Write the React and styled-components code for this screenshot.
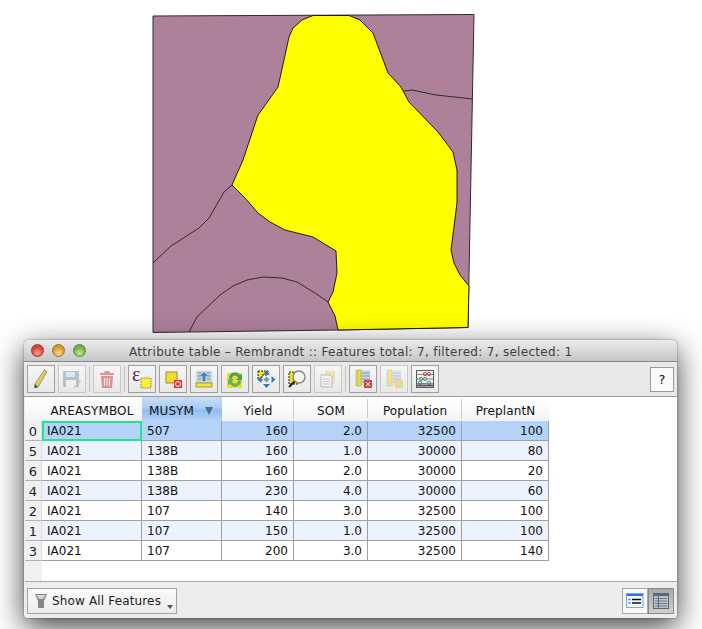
import React from 'react'
import styled, { createGlobalStyle } from 'styled-components'

const rows = [
  { id: 0, sym: '507', yieldVal: 160, som: '2.0', pop: 32500, plant: 100, selected: true },
  { id: 5, sym: '138B', yieldVal: 160, som: '1.0', pop: 30000, plant: 80, alt: true },
  { id: 6, sym: '138B', yieldVal: 160, som: '2.0', pop: 30000, plant: 20 },
  { id: 4, sym: '138B', yieldVal: 230, som: '4.0', pop: 30000, plant: 60, alt: true },
  { id: 2, sym: '107', yieldVal: 140, som: '3.0', pop: 32500, plant: 100 },
  { id: 1, sym: '107', yieldVal: 150, som: '1.0', pop: 32500, plant: 100, alt: true },
  { id: 3, sym: '107', yieldVal: 200, som: '3.0', pop: 32500, plant: 140 },
]

const COLUMNS = '17px 100px 80px 72px 74px 94px 87px'

const GlobalStyle = createGlobalStyle`
  html, body {
    margin: 0;
    padding: 0;
    background: #fff;
  }
  body {
    width: 702px;
    height: 629px;
    overflow: hidden;
    font-family: "DejaVu Sans", "Liberation Sans", sans-serif;
    font-size: 12px;
    color: #111;
  }
`

const MapCanvas = styled.svg`
  display: block;
  width: 702px;
  height: 340px;
`

const Window = styled.div`
  position: relative;
  width: 653px;
  height: 278px;
  margin-left: 24px;
  display: flex;
  flex-direction: column;
  border-radius: 5px 5px 3px 3px;
  background: #ededed;
  box-shadow: 0 9px 30px rgba(0, 0, 0, 0.75), 0 0 2px rgba(0, 0, 0, 0.5);
  overflow: hidden;
`

const TitleBar = styled.div`
  height: 22px;
  flex: none;
  display: flex;
  align-items: center;
  position: relative;
  padding-left: 7px;
  gap: 8px;
  background: linear-gradient(#ececec, #c6c6c6);
  border-bottom: 1px solid #868686;
  box-sizing: border-box;
`

const Light = styled.span`
  width: 13px;
  height: 13px;
  border-radius: 50%;
  border: 1px solid ${(p) => p.$edge};
  box-sizing: border-box;
  background: radial-gradient(circle at 50% 75%, ${(p) => p.$glow}, ${(p) => p.$color} 60%);
`

const Title = styled.div`
  flex: 1;
  margin-left: 35px;
  padding-top: 2px;
  text-align: left;
  color: #3d3d3d;
  font-size: 12px;
  letter-spacing: 0.3px;
  white-space: nowrap;
`

const Toolbar = styled.div`
  height: 35px;
  flex: none;
  display: flex;
  align-items: center;
  gap: 3px;
  padding: 0 3px 0 3px;
  background: #e9e9e9;
  border-bottom: 1px solid #9c9c9c;
  box-sizing: border-box;
`

const ToolButton = styled.button`
  width: 28px;
  height: 28px;
  padding: 0;
  margin: 0;
  display: flex;
  align-items: center;
  justify-content: center;
  background: linear-gradient(#f6f6f6, #e8e8e8);
  border: 1px solid ${(p) => (p.disabled ? '#c8c8c8' : '#a0a0a0')};
  svg {
    overflow: visible;
    opacity: ${(p) => (p.disabled ? 0.5 : 1)};
  }
`

const Divider = styled.span`
  width: 1px;
  height: 26px;
  background: #c4c4c4;
`

const HelpButton = styled.button`
  width: 24px;
  height: 25px;
  margin: 0 0 0 auto;
  padding: 0;
  font-family: inherit;
  font-size: 13px;
  color: #111;
  background: #fafafa;
  border: 1px solid #9a9a9a;
`

const TableArea = styled.div`
  flex: 1;
  background: #fff;
  border-bottom: 1px solid #ababab;
  display: flex;
  flex-direction: column;
  box-sizing: border-box;
  margin-left: 1px;
`

const Row = styled.div`
  display: grid;
  grid-template-columns: ${COLUMNS};
  width: 524px;
`

const HeaderRow = styled(Row)`
  height: 24px;
  grid-template-rows: 24px;
`

const HeaderCell = styled.div`
  display: flex;
  align-items: center;
  justify-content: ${(p) => (p.$active ? 'space-between' : 'center')};
  padding: ${(p) => (p.$active ? '3px 9px 0 7px' : '3px 0 0')};
  box-sizing: border-box;
  letter-spacing: 0.12px;
  background: ${(p) => (p.$active ? 'linear-gradient(#c9def6, #a9cdf3 45%, #8fbdf0 55%, #b4d3f5)' : 'linear-gradient(#fff, #f3f3f3)')};
  position: relative;
  &::after {
    content: '';
    position: absolute;
    right: 0;
    top: 2px;
    bottom: 3px;
    width: 1px;
    background: ${(p) => (p.$plain || p.$active ? 'transparent' : '#c9c9c9')};
  }
`

const SortArrow = styled.span`
  width: 0;
  height: 0;
  border-left: 4px solid transparent;
  border-right: 4px solid transparent;
  border-top: 8px solid #4f6a8c;
`

const DataRow = styled(Row)`
  height: 20px;
  grid-template-rows: 20px;
  background: ${(p) => (p.$selected ? '#b5d3f9' : p.$alt ? '#edf3fe' : '#fff')};
`

const RowHead = styled.div`
  background: #f0f0f0;
  border-bottom: 1px solid #b2b2b2;
  border-right: 1px solid #dcdcdc;
  box-sizing: border-box;
  text-align: center;
  line-height: 22px;
  font-size: 13px;
  color: #222;
`

const Cell = styled.div`
  box-sizing: border-box;
  border-right: 1px solid #a0a0a0;
  border-bottom: 1px solid #a0a0a0;
  padding: 0 ${(p) => (p.$num ? '5px' : '4px')} 0 ${(p) => (p.$num ? '0' : '5px')};
  text-align: ${(p) => (p.$num ? 'right' : 'left')};
  line-height: 20px;
  white-space: nowrap;
  overflow: hidden;
`

const FocusCell = styled(Cell)`
  border: 2px solid #1fe88c;
  padding-left: 3px;
  line-height: 17px;
`

const EmptyHead = styled.div`
  flex: 1;
  width: 17px;
  background: #f0f0f0;
`

const Footer = styled.div`
  height: 36px;
  flex: none;
  display: flex;
  align-items: flex-start;
  justify-content: space-between;
  padding: 6px 3px 0 3px;
  box-sizing: border-box;
`

const FilterButton = styled.button`
  width: 150px;
  height: 26px;
  display: flex;
  align-items: center;
  padding: 0 0 0 6px;
  margin: 0;
  gap: 4px;
  font: inherit;
  letter-spacing: 0.15px;
  color: #222;
  background: linear-gradient(#fafafa, #ececec);
  border: 1px solid #a3a3a3;
  position: relative;
  &::after {
    content: '';
    position: absolute;
    right: 3px;
    bottom: 4px;
    border-left: 3px solid transparent;
    border-right: 3px solid transparent;
    border-top: 4px solid #555;
  }
`

const ViewSwitch = styled.div`
  display: flex;
`

const ViewButton = styled.button`
  width: 26px;
  height: 26px;
  padding: 0;
  display: flex;
  align-items: center;
  justify-content: center;
  background: ${(p) => (p.$pressed ? 'linear-gradient(#a9a9a9, #d0d0d0)' : '#f7f7f7')};
  border: 1px solid ${(p) => (p.$pressed ? '#8a8a8a' : '#a8a8a8')};
`

const Icon = ({ children }) => (
  <svg width="20" height="20" viewBox="0 0 20 20">
    {children}
  </svg>
)

const Pencil = () => (
  <Icon>
    <path d="M13.500 1l2.500 1.500L7 18l-3.500 1 .5-4z" fill="#e6d24e" stroke="#9a9270" />
    <path d="M4 15L7 18l-3.500 1z" fill="#4a4a4a" />
  </Icon>
)

const Floppy = () => (
  <Icon>
    <rect x="1" y="2" width="16" height="16" rx="1" fill="#7d93ad" />
    <rect x="4" y="3" width="9" height="5" fill="#d3dce6" />
    <rect x="4" y="11" width="10" height="7" fill="#eceff2" />
    <path d="M12 18l6-7 1 1-6 7-2 0z" fill="#d08a3c" />
  </Icon>
)

const Trash = () => (
  <Icon>
    <rect x="3" y="4" width="14" height="2" fill="#c53a3a" />
    <rect x="7.500" y="2" width="5" height="2" fill="#c53a3a" />
    <path d="M4 7h12l-1 12H5z" fill="#c53a3a" />
    <path d="M7.500 9v8M10 9v8M12.500 9v8" stroke="#f2dede" strokeWidth="1.200" />
  </Icon>
)

const Expression = () => (
  <Icon>
    <text x="0" y="12" fontSize="20" fontFamily="'Liberation Serif', serif" fill="#5b1f6e">
      ε
    </text>
    <rect x="9" y="9" width="10" height="10" fill="#f5ee3a" stroke="#8d8a30" strokeDasharray="1.500 1" />
  </Icon>
)

const Deselect = () => (
  <Icon>
    <rect x="3" y="3" width="11" height="11" fill="#f4dc2c" stroke="#9d8a2a" />
    <rect x="11" y="11" width="8" height="8" fill="#dc3232" />
    <circle cx="15" cy="15" r="2.500" fill="none" stroke="#fff" />
  </Icon>
)

const MoveTop = () => (
  <Icon>
    <rect x="2" y="2" width="16" height="12" fill="#c5d3e0" />
    <path d="M4 4h3M4 7h3M4 10h3M13 4h3M13 7h3M13 10h3" stroke="#7d8fa3" />
    <path d="M10 3l4 4h-2.500v5h-3V7H6z" fill="#3f82c9" />
    <rect x="2" y="14" width="16" height="4" fill="#f2e53a" stroke="#a39a35" />
  </Icon>
)

const Invert = () => (
  <Icon>
    <rect x="2" y="4" width="15" height="15" fill="#e8dd3a" />
    <path d="M4 9a6 6 0 0 1 11-3l2-1v6h-6l2-2a3 3 0 0 0-6 1z" fill="#4fa04a" />
    <path d="M16 12a6 6 0 0 1-11 3l-2 1v-6h6l-2 2a3 3 0 0 0 6-1z" fill="#62b25a" />
  </Icon>
)

const PanSelected = () => (
  <Icon>
    <path d="M2 2h10v4H6v5H2z" fill="#efdf2e" stroke="#222" strokeDasharray="2 1" />
    <path d="M10.500 1.500l3.500 4h-7zM10.500 19l-3.500-4h7zM1.500 10.500l4-3.500v7zM19.500 10.500l-4 3.500V7z" fill="#3e74b8" />
    <path d="M10.500 7.500l3 3-3 3-3-3z" fill="#6f9ad0" />
  </Icon>
)

const ZoomSelected = () => (
  <Icon>
    <rect x="2" y="3" width="9" height="12" fill="#efdf2e" stroke="#222" strokeDasharray="2 1" />
    <circle cx="12" cy="8" r="6" fill="#f2f3ea" stroke="#8c8c7d" strokeWidth="1.500" />
    <path d="M7.500 12.500L2 18" stroke="#222" strokeWidth="2.200" />
  </Icon>
)

const Paste = () => (
  <Icon>
    <rect x="7" y="2" width="10" height="13" fill="#e4d473" />
    <path d="M3 6h9l2 2v10H3z" fill="#f5f5f5" stroke="#8a8a8a" />
    <path d="M5 10h7M5 12.500h7M5 15h7" stroke="#a9a9a9" />
  </Icon>
)

const ColumnDelete = ({ star }) => (
  <Icon>
    <rect x="2" y="1" width="15" height="16" fill="#cfdae5" />
    <path d="M9 4h8M9 7h8M9 10h8M9 13h8" stroke="#7c90a5" />
    <rect x="4" y="1" width="4" height="16" fill="#ecdf2c" stroke="#a89f30" strokeWidth="0.600" />
    {star ? (
      <rect x="11" y="11" width="8" height="8" fill="#e6bf40" />
    ) : (
      <>
        <rect x="11" y="11" width="8" height="8" fill="#d84444" />
        <path d="M13 13l4 4M17 13l-4 4" stroke="#fff" />
      </>
    )}
  </Icon>
)

const Abacus = () => (
  <Icon>
    <rect x="1.500" y="1.500" width="17" height="17" fill="#eef0f0" stroke="#5a5a5a" />
    <path d="M2 5.500h16M2 10h16M2 14.500h16" stroke="#888" />
    <path d="M2 16.500h16" stroke="#555" strokeWidth="2" />
    <circle cx="10" cy="5" r="1.700" fill="none" stroke="#c74a4a" />
    <circle cx="14" cy="5" r="1.700" fill="none" stroke="#c74a4a" />
    <circle cx="6" cy="10" r="1.700" fill="none" stroke="#5ba55b" />
    <circle cx="10" cy="10" r="1.700" fill="none" stroke="#5ba55b" />
    <circle cx="5" cy="14" r="1.700" fill="none" stroke="#4a80b8" />
    <circle cx="14" cy="14" r="1.700" fill="none" stroke="#4a80b8" />
  </Icon>
)

const Funnel = () => (
  <svg width="14" height="16" viewBox="0 0 14 16">
    <path d="M1 1h12l-3 7v7H4V8z" fill="#858585" />
    <path d="M2.500 2h9L9 6H5z" fill="#d4d4d4" />
  </svg>
)

const FormView = () => (
  <svg width="18" height="16" viewBox="0 0 18 16">
    <rect x="0.500" y="0.500" width="15" height="14" transform="scale(1.100 1)" fill="#f2f6fd" stroke="#8aa4d0" />
    <rect x="1" y="1" width="16" height="2" fill="#2f6fe0" />
    <path d="M6 6.500h9M6 10h9" stroke="#111" strokeWidth="1.600" />
    <path d="M2.500 6.500h2M2.500 10h2" stroke="#3a7fe0" strokeWidth="1.600" />
  </svg>
)

const TableView = () => (
  <svg width="16" height="16" viewBox="0 0 16 16">
    <rect x="0.500" y="0.500" width="15" height="15" fill="#b8c4c8" stroke="#566a75" />
    <rect x="1" y="1" width="14" height="2" fill="#566a75" />
    <path d="M2 5.500h12M2 8h12M2 10.500h12M2 13h12" stroke="#6c7f8a" />
    <path d="M5.500 3v12" stroke="#566a75" />
  </svg>
)

const MapView = () => (
  <MapCanvas viewBox="0 0 702 340">
    <polygon
      points="153,16 474,14.500 468,327.500 338,330 153,332.500"
      fill="#ad8199"
      stroke="#2f2a33"
    />
    <polygon
      points="313,15.500 349,15.500 360,20 373,33 388,73 401,87 409,102 438,132 453,152 457,170 457,203 451,250 454,263 460,275 469,286 468,327.500 338,330 335,316 328,302 333,292 337,273 336,251 313,237 285,230 270,222 258,213 245,198 232,185 243,160 258,115 278,87 289,37 293,28 302,20"
      fill="#ffff00"
      stroke="#1d1a22"
    />
    <polyline
      points="232,185 224,192 209,218 199,228 171,246 153,263"
      fill="none"
      stroke="#2f2a33"
    />
    <polyline
      points="189,332 197,317 220,295 233,286 247,280 263,277 282,278 297,282 315,293 328,302"
      fill="none"
      stroke="#2f2a33"
    />
    <polyline points="404,91 412,90 436,95 473,99" fill="none" stroke="#2f2a33" />
  </MapCanvas>
)

const App = () => (
  <>
    <GlobalStyle />
    <MapView />
    <Window>
      <TitleBar>
        <Light $color="#d8433a" $glow="#ff9a8f" $edge="#8e3b36" />
        <Light $color="#d99a2b" $glow="#ffd98a" $edge="#94702f" />
        <Light $color="#74ad45" $glow="#c4ec9e" $edge="#5b8340" />
        <Title>Attribute table – Rembrandt :: Features total: 7, filtered: 7, selected: 1</Title>
      </TitleBar>
      <Toolbar>
        <ToolButton><Pencil /></ToolButton>
        <ToolButton disabled><Floppy /></ToolButton>
        <Divider />
        <ToolButton disabled><Trash /></ToolButton>
        <Divider />
        <ToolButton><Expression /></ToolButton>
        <ToolButton><Deselect /></ToolButton>
        <ToolButton><MoveTop /></ToolButton>
        <ToolButton><Invert /></ToolButton>
        <ToolButton><PanSelected /></ToolButton>
        <ToolButton><ZoomSelected /></ToolButton>
        <ToolButton disabled><Paste /></ToolButton>
        <Divider />
        <ToolButton><ColumnDelete /></ToolButton>
        <ToolButton disabled><ColumnDelete star /></ToolButton>
        <ToolButton><Abacus /></ToolButton>
        <HelpButton>?</HelpButton>
      </Toolbar>
      <TableArea>
        <HeaderRow>
          <HeaderCell $plain />
          <HeaderCell $plain>AREASYMBOL</HeaderCell>
          <HeaderCell $active>
            MUSYM
            <SortArrow />
          </HeaderCell>
          <HeaderCell>Yield</HeaderCell>
          <HeaderCell>SOM</HeaderCell>
          <HeaderCell>Population</HeaderCell>
          <HeaderCell $plain>PreplantN</HeaderCell>
        </HeaderRow>
        {rows.map((r) => (
          <DataRow key={r.id} $selected={r.selected} $alt={r.alt}>
            <RowHead>{r.id}</RowHead>
            {r.selected ? <FocusCell>IA021</FocusCell> : <Cell>IA021</Cell>}
            <Cell>{r.sym}</Cell>
            <Cell $num>{r.yieldVal}</Cell>
            <Cell $num>{r.som}</Cell>
            <Cell $num>{r.pop}</Cell>
            <Cell $num>{r.plant}</Cell>
          </DataRow>
        ))}
        <EmptyHead />
      </TableArea>
      <Footer>
        <FilterButton>
          <Funnel />
          Show All Features
        </FilterButton>
        <ViewSwitch>
          <ViewButton><FormView /></ViewButton>
          <ViewButton $pressed><TableView /></ViewButton>
        </ViewSwitch>
      </Footer>
    </Window>
  </>
)

export default App
